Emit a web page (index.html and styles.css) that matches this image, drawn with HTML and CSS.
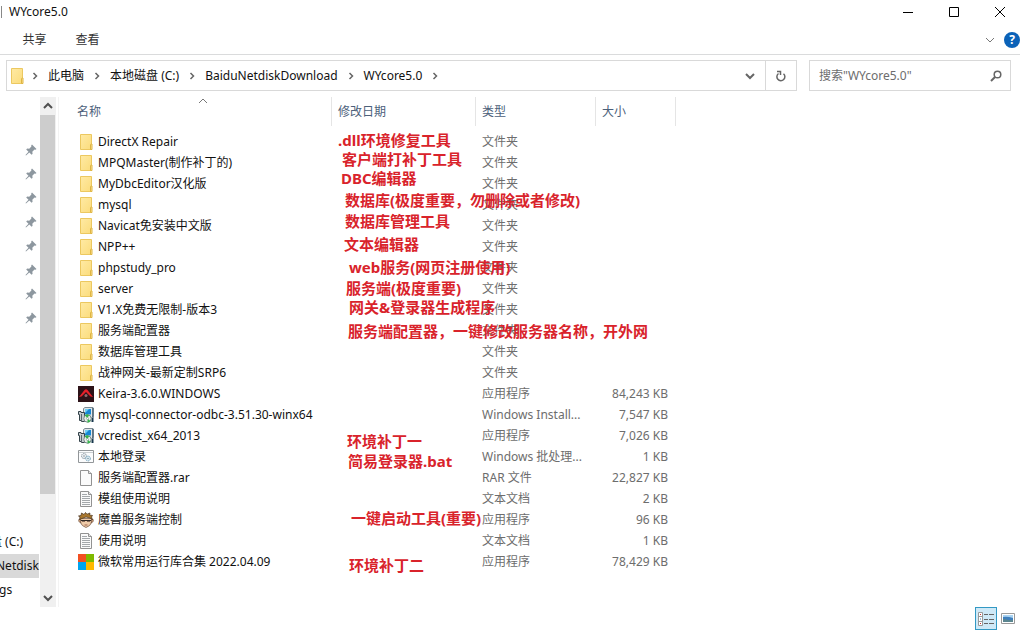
FILE: index.html
```html
<!DOCTYPE html>
<html lang="zh-CN">
<head>
<meta charset="utf-8">
<title>WYcore5.0</title>
<link rel="stylesheet" href="styles.css">
</head>
<body>
<svg width="0" height="0" class="defs" aria-hidden="true">
  <defs>
    <linearGradient id="fold" x1="0" y1="0" x2="1" y2="1"><stop offset="0" stop-color="#ffeaa4"/><stop offset="1" stop-color="#fbdc7c"/></linearGradient>
    <symbol id="folder" viewBox="0 0 16 16"><path d="M2.500.5h11v15h-11z" fill="url(#fold)" stroke="#ecc860"/><path d="M12.500 15.500v-4.500q0-1 1-1h.5v5.500z" fill="#ffe494" stroke="#deb544"/></symbol>
    <symbol id="keira" viewBox="0 0 16 16"><path d="M0 0h16v16H0z" fill="#2c1218"/><path d="M1 11 6.500 4Q8 2.500 9.500 4L15 11l-2.500-.5L8 6 3.500 10.500z" fill="#e5202a"/><circle cx="8" cy="9.500" r="1.500" fill="#8c6a70"/></symbol>
    <symbol id="installer" viewBox="0 0 16 16"><path d="M5.500 1.500 7 .5h8v9l-1.500 1h-8z" fill="#dfe6ea" stroke="#7b8a93"/><path d="M7 2h6v5.500H7z" fill="#1687d4"/><path d="M7 2h4L7 6z" fill="#71d0f5"/><path d="M14.500 1h1v14h-2v-4h1z" fill="#17364c"/><path d="M.5 4.500H3v1h3.500v9H3.500v-1h-2v-6h-1z" fill="#c4cbce" stroke="#34434a"/><path d="M3.500 7v6" stroke="#58686f"/><circle cx="9.500" cy="11.500" r="3.700" fill="#e8efe8" stroke="#788"/><path d="M9.500 11.500 7 8.500q2-2 4-.5zM9.500 11.500l3 2.500q-1 1.500-3 1.500z" fill="#35b54c"/><circle cx="9.500" cy="11.500" r="1" fill="#fff" stroke="#899" stroke-width=".7"/></symbol>
    <symbol id="batch" viewBox="0 0 16 16"><path d="M.5 1.500h15v12H.5z" fill="#fbfcfd" stroke="#929699"/><path d="M1 3.500h14" stroke="#c9ced1"/><circle cx="6" cy="7" r="2.500" fill="#e9edf0" stroke="#8e9aa4" stroke-dasharray="1.500 .6"/><circle cx="6" cy="7" r=".8" fill="#8c969d"/><circle cx="10" cy="9.500" r="2.400" fill="#e0edf4" stroke="#75a4bc" stroke-dasharray="1.500 .6"/><circle cx="10" cy="9.500" r=".8" fill="#7996a5"/></symbol>
    <symbol id="page" viewBox="0 0 16 16"><path d="M2.500.5h8l3 3v12h-11z" fill="#fafafa" stroke="#929292"/><path d="M10.500.5v3h3" fill="#e4e4e4" stroke="#929292"/></symbol>
    <symbol id="text" viewBox="0 0 16 16"><path d="M2.500.5h8l3 3v12h-11z" fill="#fafafa" stroke="#929292"/><path d="M10.500.5v3h3" fill="#e4e4e4" stroke="#929292"/><path d="M4 3.500h5M4 5.500h8M4 7.500h8M4 9.500h8M4 11.500h8M4 13.500h8" stroke="#a4a8ab"/></symbol>
    <symbol id="face" viewBox="0 0 16 16"><path d="M2.500 6.500h11v4q-1 3.500-5.500 5-4.500-1.500-5.500-5z" fill="#efcba8" stroke="#6d5140" stroke-width=".7"/><path d="M2.500 7.500Q0 6.500.8 9.500l2 1.500zM13.500 7.500q2.500-1 1.700 2l-2 1.500z" fill="#dba980" stroke="#6d5140" stroke-width=".7"/><path d="M1.500 7.500 2 5 .5 4l2.500-.5L3.500 1 6 2.500 7.500.5 9 2.200 12 1l-.5 2 3 .5-1 1.500 1 2.500-2.500-1.500L8 5 4 6.500z" fill="#a8762d" stroke="#47321e" stroke-width=".7"/><path d="M3 8.500h10" stroke="#302823"/><path d="M4 9.500h3M9 9.500h3" stroke="#72554a" stroke-width=".8"/><path d="M6.500 13h3" stroke="#8c4a3a" stroke-width=".8"/></symbol>
    <symbol id="windows" viewBox="0 0 16 16"><path d="M0 0h8v8H0z" fill="#f25022"/><path d="M8 0h8v8H8z" fill="#7fba00"/><path d="M0 8h8v8H0z" fill="#00a4ef"/><path d="M8 8h8v8H8z" fill="#ffb900"/></symbol>
    <symbol id="pin" viewBox="0 0 12 12"><path d="m7 .5 4.500 4.500-1 .8-1-.2-2.200 2.200.3 2-1 1L4.300 8.500 1 11.500l-.5-.5 3-3.300L1.200 5.400l1-1 2 .3L6.400 2.500l-.2-1z" fill="#8d979f"/></symbol>
    <symbol id="right" viewBox="0 0 8 8"><path d="m2.500 1 3 3-3 3" fill="none" stroke="#666" stroke-width="1.500"/></symbol>
    <symbol id="down" viewBox="0 0 10 10"><path d="m1 3 4 4 4-4" fill="none" stroke="currentColor" stroke-width="var(--w, 2)"/></symbol>
    <symbol id="up" viewBox="0 0 10 10"><path d="m1 7 4-4 4 4" fill="none" stroke="currentColor" stroke-width="var(--w, 2)"/></symbol>
  </defs>
</svg>
<div class="window">
  <header class="titlebar">
    <span class="mark"></span>
    <h1 class="title">WYcore5.0</h1>
    <div class="controls">
      <button class="control" aria-label="最小化"><svg width="12" height="12"><path d="M1 6.500h10" stroke="#000"/></svg></button>
      <button class="control" aria-label="最大化"><svg width="12" height="12"><path d="M1.500 1.500h9v9h-9z" fill="none" stroke="#000"/></svg></button>
      <button class="control" aria-label="关闭"><svg width="12" height="12"><path d="m1 1 10 10M11 1 1 11" stroke="#000"/></svg></button>
    </div>
  </header>
  <nav class="ribbon">
    <button class="tab">共享</button>
    <button class="tab">查看</button>
    <button class="expand" aria-label="展开功能区"><svg class="thin" width="10" height="10"><use href="#down"/></svg></button>
    <button class="help" aria-label="帮助">?</button>
  </nav>
  <div class="toolbar">
    <div class="address">
      <svg width="16" height="16"><use href="#folder"/></svg>
      <svg class="sep first" width="8" height="8"><use href="#right"/></svg>
      <button class="crumb">此电脑</button>
      <svg class="sep" width="8" height="8"><use href="#right"/></svg>
      <button class="crumb">本地磁盘 (C:)</button>
      <svg class="sep" width="8" height="8"><use href="#right"/></svg>
      <button class="crumb">BaiduNetdiskDownload</button>
      <svg class="sep" width="8" height="8"><use href="#right"/></svg>
      <button class="crumb">WYcore5.0</button>
      <svg class="sep" width="8" height="8"><use href="#right"/></svg>
      <button class="history" aria-label="历史记录"><svg width="10" height="10"><use href="#down"/></svg></button>
      <button class="refresh" aria-label="刷新"><svg width="12" height="12"><path d="M3.500 3.500a4 4 0 1 0 5 .2M2 1.500h3.500V5" fill="none" stroke="#666" stroke-width="1.500"/></svg></button>
    </div>
    <div class="search">
      <input class="query" type="text" aria-label="搜索" placeholder='搜索"WYcore5.0"'>
      <button class="find" aria-label="开始搜索"><svg width="12" height="12"><circle cx="7.500" cy="4.500" r="3.300" fill="none" stroke="#666" stroke-width="1.500"/><path d="M5 7 1 11" stroke="#666" stroke-width="2"/></svg></button>
    </div>
  </div>
  <div class="body">
    <aside class="side">
      <ul class="tree">
        <li class="node pinned"><svg width="12" height="12"><use href="#pin"/></svg></li>
        <li class="node pinned"><svg width="12" height="12"><use href="#pin"/></svg></li>
        <li class="node pinned"><svg width="12" height="12"><use href="#pin"/></svg></li>
        <li class="node pinned"><svg width="12" height="12"><use href="#pin"/></svg></li>
        <li class="node pinned"><svg width="12" height="12"><use href="#pin"/></svg></li>
        <li class="node pinned"><svg width="12" height="12"><use href="#pin"/></svg></li>
        <li class="node pinned"><svg width="12" height="12"><use href="#pin"/></svg></li>
        <li class="node pinned"><svg width="12" height="12"><use href="#pin"/></svg></li>
        <li class="node group"></li><li class="node"></li><li class="node"></li><li class="node"></li>
        <li class="node"></li><li class="node"></li><li class="node"></li><li class="node"></li>
        <li class="node drive">盘 (C:)</li>
        <li class="node selected">Netdisk</li>
        <li class="node tail">gs</li>
      </ul>
      <div class="scroll">
        <button class="arrow" aria-label="向上滚动"><svg width="10" height="10"><use href="#up"/></svg></button>
        <div class="track"><div class="thumb"></div></div>
        <button class="arrow" aria-label="向下滚动"><svg width="10" height="10"><use href="#down"/></svg></button>
      </div>
    </aside>
    <main class="list">
      <table class="files">
        <thead>
          <tr>
            <th class="name"><span class="head">名称<svg class="sort thin" width="10" height="10"><use href="#up"/></svg></span></th>
            <th class="date"><span class="head">修改日期</span></th>
            <th class="type"><span class="head">类型</span></th>
            <th class="size"><span class="head">大小</span></th>
          </tr>
        </thead>
        <tbody>
          <tr><td><span class="file"><svg width="16" height="16"><use href="#folder"/></svg>DirectX Repair</span></td><td></td><td>文件夹</td><td></td></tr>
          <tr><td><span class="file"><svg width="16" height="16"><use href="#folder"/></svg>MPQMaster(制作补丁的)</span></td><td></td><td>文件夹</td><td></td></tr>
          <tr><td><span class="file"><svg width="16" height="16"><use href="#folder"/></svg>MyDbcEditor汉化版</span></td><td></td><td>文件夹</td><td></td></tr>
          <tr><td><span class="file"><svg width="16" height="16"><use href="#folder"/></svg>mysql</span></td><td></td><td>文件夹</td><td></td></tr>
          <tr><td><span class="file"><svg width="16" height="16"><use href="#folder"/></svg>Navicat免安装中文版</span></td><td></td><td>文件夹</td><td></td></tr>
          <tr><td><span class="file"><svg width="16" height="16"><use href="#folder"/></svg>NPP++</span></td><td></td><td>文件夹</td><td></td></tr>
          <tr><td><span class="file"><svg width="16" height="16"><use href="#folder"/></svg>phpstudy_pro</span></td><td></td><td>文件夹</td><td></td></tr>
          <tr><td><span class="file"><svg width="16" height="16"><use href="#folder"/></svg>server</span></td><td></td><td>文件夹</td><td></td></tr>
          <tr><td><span class="file"><svg width="16" height="16"><use href="#folder"/></svg>V1.X免费无限制-版本3</span></td><td></td><td>文件夹</td><td></td></tr>
          <tr><td><span class="file"><svg width="16" height="16"><use href="#folder"/></svg>服务端配置器</span></td><td></td><td>文件夹</td><td></td></tr>
          <tr><td><span class="file"><svg width="16" height="16"><use href="#folder"/></svg>数据库管理工具</span></td><td></td><td>文件夹</td><td></td></tr>
          <tr><td><span class="file"><svg width="16" height="16"><use href="#folder"/></svg>战神网关-最新定制SRP6</span></td><td></td><td>文件夹</td><td></td></tr>
          <tr><td><span class="file"><svg width="16" height="16"><use href="#keira"/></svg>Keira-3.6.0.WINDOWS</span></td><td></td><td>应用程序</td><td>84,243 KB</td></tr>
          <tr><td><span class="file"><svg width="16" height="16"><use href="#installer"/></svg>mysql-connector-odbc-3.51.30-winx64</span></td><td></td><td>Windows Install...</td><td>7,547 KB</td></tr>
          <tr><td><span class="file"><svg width="16" height="16"><use href="#installer"/></svg>vcredist_x64_2013</span></td><td></td><td>应用程序</td><td>7,026 KB</td></tr>
          <tr><td><span class="file"><svg width="16" height="16"><use href="#batch"/></svg>本地登录</span></td><td></td><td>Windows 批处理...</td><td>1 KB</td></tr>
          <tr><td><span class="file"><svg width="16" height="16"><use href="#page"/></svg>服务端配置器.rar</span></td><td></td><td>RAR 文件</td><td>22,827 KB</td></tr>
          <tr><td><span class="file"><svg width="16" height="16"><use href="#text"/></svg>模组使用说明</span></td><td></td><td>文本文档</td><td>2 KB</td></tr>
          <tr><td><span class="file"><svg width="16" height="16"><use href="#face"/></svg>魔兽服务端控制</span></td><td></td><td>应用程序</td><td>96 KB</td></tr>
          <tr><td><span class="file"><svg width="16" height="16"><use href="#text"/></svg>使用说明</span></td><td></td><td>文本文档</td><td>1 KB</td></tr>
          <tr><td><span class="file"><svg width="16" height="16"><use href="#windows"/></svg>微软常用运行库合集 2022.04.09</span></td><td></td><td>应用程序</td><td>78,429 KB</td></tr>
        </tbody>
      </table>
      <p class="note n1">.dll环境修复工具</p>
      <p class="note n2">客户端打补丁工具</p>
      <p class="note n3">DBC编辑器</p>
      <p class="note n4">数据库(极度重要，勿删除或者修改)</p>
      <p class="note n5">数据库管理工具</p>
      <p class="note n6">文本编辑器</p>
      <p class="note n7">web服务(网页注册使用)</p>
      <p class="note n8">服务端(极度重要)</p>
      <p class="note n9">网关&amp;登录器生成程序</p>
      <p class="note n10">服务端配置器，一键修改服务器名称，开外网</p>
      <p class="note n11">环境补丁一</p>
      <p class="note n12">简易登录器.bat</p>
      <p class="note n13">一键启动工具(重要)</p>
      <p class="note n14">环境补丁二</p>
    </main>
  </div>
  <footer class="status">
    <button class="view active" aria-label="详细信息"><svg width="16" height="14"><path d="M.5.5h4v13h-4zM.5 4.500h4M.5 9.500h4" fill="#fff" stroke="#999"/><path d="M2 2.500h1M2 11.500h1" stroke="#c33"/><path d="M2 7h1" stroke="#37a"/><path d="M6 2.500h4M11 2.500h5M6 7.500h4M11 7.500h5M6 11.500h4M11 11.500h5" stroke="#666"/></svg></button>
    <button class="view" aria-label="大图标"><svg width="14" height="12"><path d="M.5.5h13v10H.5z" fill="#fff" stroke="#999"/><path d="M2 2h10v7H2z" fill="#a9d3f2"/><path d="M2 4q4-1 10 1v2H2z" fill="#3f7fbc"/><path d="M2 6q3 0 5 1h5v2H2z" fill="#5b8690"/></svg></button>
  </footer>
</div>
</body>
</html>
```

FILE: styles.css
```css
* { box-sizing: border-box; }
body { margin: 0; background: #fff; color: #111; font: 12px/16px "Noto Sans", "Noto Sans CJK SC", sans-serif; }
button { border: 0; margin: 0; padding: 0; background: none; color: inherit; font: inherit; display: flex; align-items: center; justify-content: center; }
svg { display: block; flex: none; }
.defs { position: absolute; }
.thin { --w: 1; color: #777; }
.window { min-height: 100vh; display: flex; flex-direction: column; overflow: hidden; }

.titlebar { display: flex; align-items: center; height: 24px; }
.mark { width: 2px; height: 12px; border-right: 1px solid #888; }
.title { margin: 0 0 0 7px; font-size: 12px; font-weight: 400; }
.controls { display: flex; margin: 0 -3px 0 auto; }
.control { width: 46px; height: 24px; }

.ribbon { display: flex; align-items: center; height: 31px; padding: 2px 0 0 8px; border-bottom: 1px solid #dadbdc; color: #333; }
.tab { width: 53px; height: 28px; }
.expand { width: 20px; height: 20px; margin-left: auto; }
.help { width: 16px; height: 16px; margin-left: 4px; border-radius: 50%; background: #0b62b8; color: #fff; font-weight: 700; }

.toolbar { display: flex; gap: 12px; padding: 5px 9px 6px 6px; }
.address { flex: 1; display: flex; align-items: center; height: 31px; border: 1px solid #d9d9d9; padding-left: 2px; }
.sep { margin: 0 9px; }
.first { margin: 0 9px 0 6px; }
.history { width: 30px; height: 29px; margin-left: auto; color: #666; }
.refresh { width: 31px; height: 29px; border-left: 1px solid #d9d9d9; }
.search { display: flex; width: 202px; height: 31px; border: 1px solid #d9d9d9; }
.query { flex: 1; min-width: 0; border: 0; padding: 0 0 0 9px; background: none; font: inherit; outline: 0; }
.query::placeholder { color: #6d6d6d; opacity: 1; }
.find { width: 28px; }

.body { flex: 1; display: flex; }
.side { display: flex; width: 59px; border-right: 1px solid #f3f3f3; }
.tree { width: 40px; margin: 0; padding: 41px 1px 0 0; list-style: none; overflow: hidden; }
.node { display: flex; align-items: center; height: 24px; white-space: nowrap; }
.pinned { padding-left: 25px; }
.group { margin-top: 8px; }
.drive { margin-left: -10px; }
.selected { background: #d9d9d9; margin-left: -4px; }
.tail { margin-left: -1px; }
.scroll { display: flex; flex-direction: column; width: 16px; background: #f0f0f0; color: #505050; }
.arrow { height: 18px; }
.track { flex: 1; padding-right: 1px; }
.thumb { height: 80%; background: #cdcdcd; }

.list { flex: 1; position: relative; }
.files { border-collapse: collapse; table-layout: fixed; width: 617px; }
.files th { height: 34px; padding: 0; font-weight: 400; text-align: left; vertical-align: top; color: #4c607a; }
.head { position: relative; display: flex; align-items: center; height: 29px; padding-left: 6px; border-right: 1px solid #e5e5e5; }
.name { width: 273px; }
.name .head { padding-left: 18px; }
.date { width: 144px; }
.type { width: 120px; }
.sort { position: absolute; top: -1px; left: 51%; }
.files td { height: 21px; padding: 0 8px 0 6px; color: #6d6d6d; white-space: nowrap; }
.files td:first-child { padding: 0 0 0 19px; color: #111; }
.files td:last-child { text-align: right; }
.file { display: flex; align-items: center; gap: 4px; }

.note { position: absolute; margin: 0; color: #d9232b; font-size: 15px; line-height: 20px; font-weight: 700; white-space: nowrap; }
.n1 { left: 279px; top: 33px; }
.n2 { left: 283px; top: 52px; }
.n3 { left: 282px; top: 71px; }
.n4 { left: 286px; top: 93px; }
.n5 { left: 286px; top: 114px; }
.n6 { left: 285px; top: 137px; }
.n7 { left: 290px; top: 160px; }
.n8 { left: 287px; top: 181px; }
.n9 { left: 290px; top: 200px; }
.n10 { left: 289px; top: 224px; }
.n11 { left: 288px; top: 334px; }
.n12 { left: 289px; top: 354px; }
.n13 { left: 292px; top: 411px; }
.n14 { left: 290px; top: 458px; }

.status { display: flex; justify-content: flex-end; height: 24px; padding-right: 1px; }
.view { width: 22px; height: 23px; }
.active { border: 1px solid #3399c4; background: #cfe9f7; }
```
